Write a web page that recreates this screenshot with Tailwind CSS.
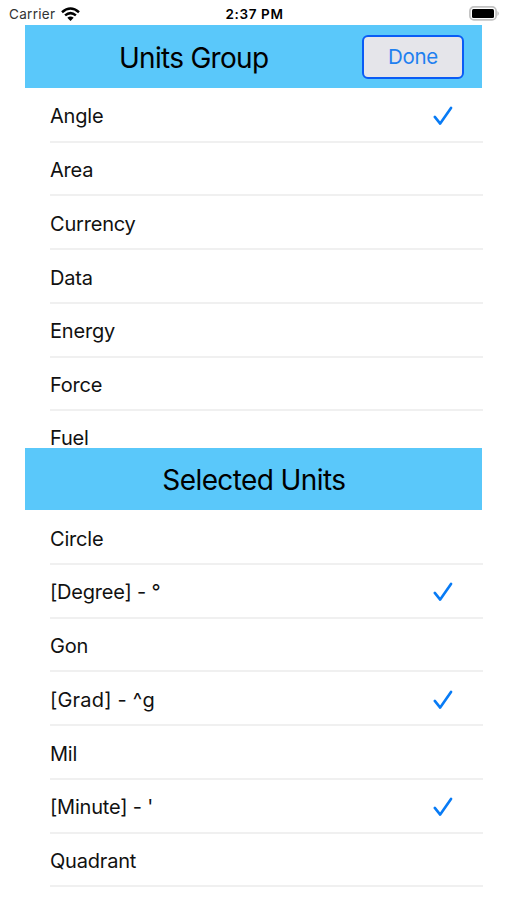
<!DOCTYPE html>
<html lang="en">
<head>
<meta charset="utf-8">
<title>Units</title>
<script src="https://cdn.jsdelivr.net/npm/@tailwindcss/browser@4"></script>
</head>
<body class="bg-white">
<svg class="hidden"><symbol id="check" viewBox="0 0 20 20"><path d="M1.8 10.9 7.2 17.6 18 1.9" fill="none" stroke="#087bf5" stroke-width="2.6" stroke-linecap="round" stroke-linejoin="round"/></symbol></svg>
<div class="flex h-[900px] w-[507px] flex-col overflow-hidden bg-white font-['Inter','Liberation_Sans',sans-serif] text-black">
  <div class="grid h-[25.3px] shrink-0 grid-cols-3 items-center pl-[9px] pr-[7px] pt-[2px] text-[13px] leading-4">
    <div class="flex items-center gap-[6px]">
      <span class="text-[13.5px] tracking-[0.3px] text-[#333]">Carrier</span>
      <svg class="h-[14px] w-[19px]" viewBox="0 0 19 14" fill="none" stroke="#000" stroke-width="2.5"><path d="M1 5.2Q9.5-2.3 18 5.2M4.1 8.4Q9.5 3.8 14.9 8.4"/><path d="M6.3 10.8Q9.5 8 12.7 10.8L9.5 13.9Z" fill="#000" stroke="none"/></svg>
    </div>
    <span class="whitespace-nowrap text-center text-[13.5px] font-semibold tracking-[0.65px]">2:37 PM</span>
    <svg class="h-[15px] w-[31px] justify-self-end" viewBox="0 0 31 15"><rect x=".9" y=".9" width="26.2" height="13" rx="4" fill="#fff" stroke="#c2c2c2" stroke-width="1.7"/><rect x="3" y="3" width="22" height="9" rx="1.5"/><path d="M28.5 5Q31 7.5 28.5 10Z" fill="#b5b5b5"/></svg>
  </div>
  <header class="ml-[25.4px] flex h-[63px] w-[457px] shrink-0 items-center bg-[#5ac8fa]">
    <h1 class="w-[336.5px] pt-[2px] text-center text-[28px] tracking-[-0.7px]">Units Group</h1>
    <button class="flex h-[44px] w-[102px] items-center justify-center rounded-[6px] border-2 border-[#0a5cf5] bg-[#e5e5ea] pt-[2px] text-[20.5px] tracking-[-0.3px] text-[#1f80f0]">Done</button>
  </header>
  <ul class="ml-[50px] h-[359.7px] w-[433px] shrink-0 overflow-hidden pt-[0.7px] text-[20px] leading-5 tracking-[-0.2px] text-[#111]">
    <li class="flex h-[53.75px] items-center justify-between border-b-2 border-[#f0f0f0] pr-[30px] pt-[3px]">Angle<svg class="h-[20px] w-[20px]"><use href="#check"/></svg></li>
    <li class="flex h-[53.75px] items-center border-b-2 border-[#f0f0f0] pt-[3px]">Area</li>
    <li class="flex h-[53.75px] items-center border-b-2 border-[#f0f0f0] pt-[3px]">Currency</li>
    <li class="flex h-[53.75px] items-center border-b-2 border-[#f0f0f0] pt-[3px]">Data</li>
    <li class="flex h-[53.75px] items-center border-b-2 border-[#f0f0f0] pt-[3px]">Energy</li>
    <li class="flex h-[53.75px] items-center border-b-2 border-[#f0f0f0] pt-[3px]">Force</li>
    <li class="flex h-[53.75px] items-center leading-[18px]">Fuel</li>
  </ul>
  <header class="ml-[25.4px] flex h-[62.5px] w-[457px] shrink-0 items-center justify-center bg-[#5ac8fa]">
    <h2 class="pt-[2px] text-[28px] tracking-[-0.6px]">Selected Units</h2>
  </header>
  <ul class="ml-[50px] w-[433px] shrink-0 pt-[0.7px] text-[20px] leading-5 tracking-[-0.2px] text-[#111]">
    <li class="flex h-[53.75px] items-center border-b-2 border-[#f0f0f0] pt-[3px]">Circle</li>
    <li class="flex h-[53.75px] items-center justify-between border-b-2 border-[#f0f0f0] pr-[30px] pt-[3px]">[Degree] - °<svg class="h-[20px] w-[20px]"><use href="#check"/></svg></li>
    <li class="flex h-[53.75px] items-center border-b-2 border-[#f0f0f0] pt-[3px]">Gon</li>
    <li class="flex h-[53.75px] items-center justify-between border-b-2 border-[#f0f0f0] pr-[30px] pt-[3px]"><span class="tracking-[0.2px]">[Grad] - ^g</span><svg class="h-[20px] w-[20px]"><use href="#check"/></svg></li>
    <li class="flex h-[53.75px] items-center border-b-2 border-[#f0f0f0] pt-[3px]">Mil</li>
    <li class="flex h-[53.75px] items-center justify-between border-b-2 border-[#f0f0f0] pr-[30px] pt-[3px]">[Minute] - '<svg class="h-[20px] w-[20px]"><use href="#check"/></svg></li>
    <li class="flex h-[53.75px] items-center border-b-2 border-[#f0f0f0] pt-[3px]">Quadrant</li>
  </ul>
</div>
</body>
</html>
